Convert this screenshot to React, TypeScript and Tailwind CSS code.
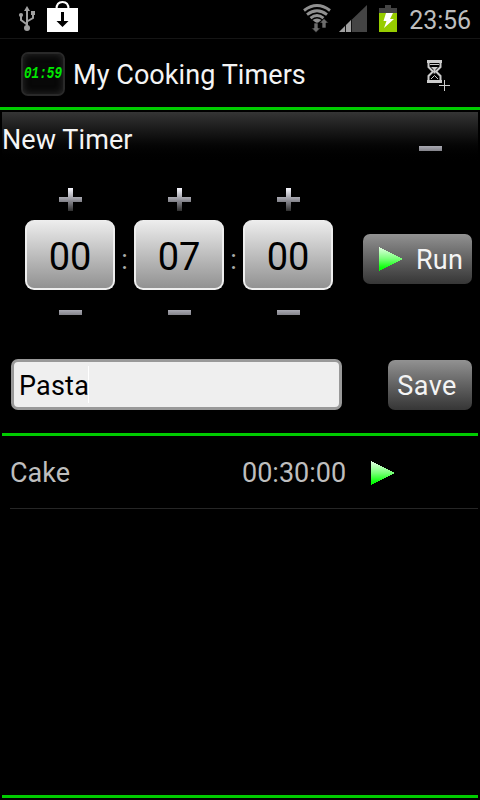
import React from "react";

const Plus = () => (
  <svg className="block" width="23" height="23" shapeRendering="crispEdges">
    <defs>
      <linearGradient id="plus" x1="0" y1="0" x2="0" y2="23" gradientUnits="userSpaceOnUse">
        <stop offset="0" stopColor="#f8f8ff" />
        <stop offset="0.5" stopColor="#96969e" />
        <stop offset="1" stopColor="#303030" />
      </linearGradient>
    </defs>
    <path d="M9 0h5v9h9v5h-9v9H9v-9H0V9h9z" fill="url(#plus)" />
  </svg>
);

const Minus = () => (
  <div className="h-[5px] w-[23px] bg-linear-to-b from-[#aaaab3] to-[#83838a]" />
);

const Play = () => (
  <svg className="block" width="24" height="24" shapeRendering="crispEdges">
    <defs>
      <linearGradient id="play" x1="0" y1="0" x2="0" y2="1">
        <stop offset="0" stopColor="#e6ffe6" />
        <stop offset="0.5" stopColor="#77ff77" />
        <stop offset="0.85" stopColor="#10ff10" />
        <stop offset="1" stopColor="#00ff00" />
      </linearGradient>
    </defs>
    <path d="M0 0L24 12L0 24z" fill="url(#play)" />
  </svg>
);

const Spinner = ({ value }: { value: string }) => (
  <div className="flex w-[90px] flex-col items-center">
    <Plus />
    <div className="mt-[9px] mb-5 flex h-[70px] w-[90px] justify-center rounded-[9px] border-2 border-t-0 border-[#eeeeee] bg-linear-to-b from-[#eeeeee] to-[#929292] pt-[13px] text-[38px] leading-[48px] text-black">
      {value}
    </div>
    <Minus />
  </div>
);

const Colon = () => (
  <div className="flex h-[127px] w-[19px] justify-center pt-[65px]">
    <span className="text-[27px] leading-[14px] text-[#aaaaaa]">:</span>
  </div>
);

const StatusBar = () => (
  <div className="flex h-[39px] items-start border-b border-[#151515]">
    {/* USB */}
    <svg className="mt-1.5 ml-[18px]" width="18" height="26" fill="none" stroke="#a0a0a0" strokeWidth="2">
      <path d="M9 3v20M9 18.5L3 14V9M9 15.5L15 12V7" />
      <path d="M9 0l3 5H6z" fill="#a0a0a0" stroke="none" />
      <circle cx="9" cy="22" r="3" fill="#a0a0a0" stroke="none" />
      <circle cx="3" cy="9" r="2.1" fill="#a0a0a0" stroke="none" />
      <path d="M13 5h4v4h-4z" fill="#a0a0a0" stroke="none" />
    </svg>
    {/* Market download */}
    <svg className="ml-[11px]" width="31" height="33">
      <path d="M9.5 9C9.500 4 12 2 15.500 2S21.500 4 21.500 9" fill="none" stroke="#fff" strokeWidth="2" />
      <path d="M0 8h31v24H0z" fill="#fff" />
      <path d="M14 12h3v9h4.500L15.500 27L9.500 21H14z" fill="#000" />
    </svg>
    <div className="flex-1" />
    {/* Wi-Fi */}
    <svg width="28" height="29" className="mt-1" fill="none">
      <g stroke="#909090" strokeWidth="2.900">
        <path d="M1 6.500Q14 -3.300 27 6.500" />
        <path d="M4 10.700Q14 3 24 10.700" />
        <path d="M7.500 14.200Q14 9 20.500 14.200" />
      </g>
      <path d="M9.500 16Q14 13 18.500 16L14 19.500z" fill="#909090" />
      <path d="M11 19h4v5h2.500L13 28.500L8.500 24H11zM19 24h4v-5h2.500L21 14.500L16.500 19H19z" fill="#6c6c6c" stroke="#000" strokeWidth="0.600" />
    </svg>
    {/* Signal */}
    <svg width="28" height="28" className="mt-[5px] ml-2">
      <path d="M28 0v27H0z" fill="#444" />
      <path d="M0 27l6-6v6zM7 20l5-5v12H7z" fill="#a0a0a0" />
      <path d="M6 20h1v7H6zM12 14h1v13h-1z" fill="#111" />
    </svg>
    {/* Battery */}
    <svg width="18" height="28" className="mt-[5px] ml-3">
      <path d="M6 0h6v3h6v5H0V3h6z" fill="#444" />
      <path d="M0 8h18v19H0z" fill="#96cc00" />
      <path d="M7 8h7l-3 6h4L5 23l2.500-7H4.500z" fill="#fff" />
    </svg>
    <div className="mt-[5px] mr-[9px] ml-3 text-[25px] leading-8 -tracking-[0.1px] text-[#bebebe]">
      23:56
    </div>
  </div>
);

const TitleBar = () => (
  <div className="flex h-[71px] border-b-[3px] border-[#00cc00]">
    <div className="mt-[13px] ml-[21px] flex size-11 items-center justify-center rounded-[7px] border-2 border-[#292929] bg-[#080808] shadow-[inset_0_0_7px_#2b2b2b]">
      <svg className="shrink-0 overflow-visible" width="40" height="24">
        <text x="1" y="16" textLength="38" lengthAdjust="spacingAndGlyphs" fill="#00e800" fontFamily="Liberation Mono, monospace" fontStyle="italic" fontWeight="bold" fontSize="17">
          01:59
        </text>
      </svg>
    </div>
    <h1 className="mt-5 ml-2 text-[27px] leading-8 tracking-[0.07px]">
      My Cooking Timers
    </h1>
    <div className="flex-1" />
    {/* New timer */}
    <svg className="mt-[21px] mr-[30px]" width="23" height="32" fill="none">
      <path d="M0 0h15v3H0zM0 20h15v3H0z" fill="#ccc" />
      <path d="M1.500 2v5L6 11.500L1.500 16v5M13.500 2v5L9 11.500L13.500 16v5" stroke="#ccc" strokeWidth="2" />
      <path d="M4 7h7L8.500 9.500v4h-2v-4z" fill="#ccc" />
      <path d="M4 19l3.500-3.500L11 19M3 4.500h9" stroke="#ccc" />
      <path d="M12 25.500h11M17.500 20v11" stroke="#ccc" />
    </svg>
  </div>
);

const NewTimer = () => (
  <section>
    <div className="flex h-[52px] items-start justify-between bg-linear-to-b from-[#353535] to-black">
      <h2 className="mt-3 text-[27px] leading-8 tracking-[0.07px]">New Timer</h2>
      <div className="mt-[34px] mr-9">
        <Minus />
      </div>
    </div>
    <div className="mt-6 flex pl-[23px]">
      <Spinner value="00" />
      <Colon />
      <Spinner value="07" />
      <Colon />
      <Spinner value="00" />
      <button className="mt-[46px] ml-[30px] flex h-[50px] w-[109px] items-center rounded-[7px] bg-linear-to-b from-[#929292] to-[#363636] pl-4 text-[27px] leading-8">
        <Play />
        <span className="ml-[13px] pt-0.5 tracking-[0.2px]">Run</span>
      </button>
    </div>
    <div className="mt-11 flex items-start justify-between pr-1.5 pl-[9px]">
      <div className="flex h-[51px] w-[331px] items-center rounded-[7px] border-[3px] border-[#999999] bg-[#efefef] pl-[5px] text-[27px] leading-8 text-black">
        <span className="w-[69px] pt-0.5 tracking-[0.2px]">Pasta</span>
        <div className="h-[37px] w-px bg-white" />
      </div>
      <button className="mt-px h-[50px] w-[84px] rounded-[7px] bg-linear-to-b from-[#929292] to-[#363636] pt-0.5 pr-1.5 text-[27px] leading-8 tracking-[0.5px]">
        Save
      </button>
    </div>
  </section>
);

export default function App() {
  return (
    <div className="flex h-[800px] w-[480px] flex-col overflow-hidden bg-black font-['Roboto',sans-serif] text-[#f4f4f4]">
      <StatusBar />
      <TitleBar />
      <main className="mx-0.5 mt-0.5 mb-0.5 flex flex-1 flex-col border-b-[3px] border-[#00cc00]">
        <NewTimer />
        <div className="mt-[23px] h-[3px] bg-[#00cc00]" />
        <div className="ml-2 flex h-[73px] border-b border-[#262626] text-[27px] leading-8 text-[#bebebe]">
          <span className="mt-[21px] w-[232px]">Cake</span>
          <span className="mt-[21px] w-[129px]">00:30:00</span>
          <div className="mt-[25px]">
            <Play />
          </div>
        </div>
      </main>
    </div>
  );
}
